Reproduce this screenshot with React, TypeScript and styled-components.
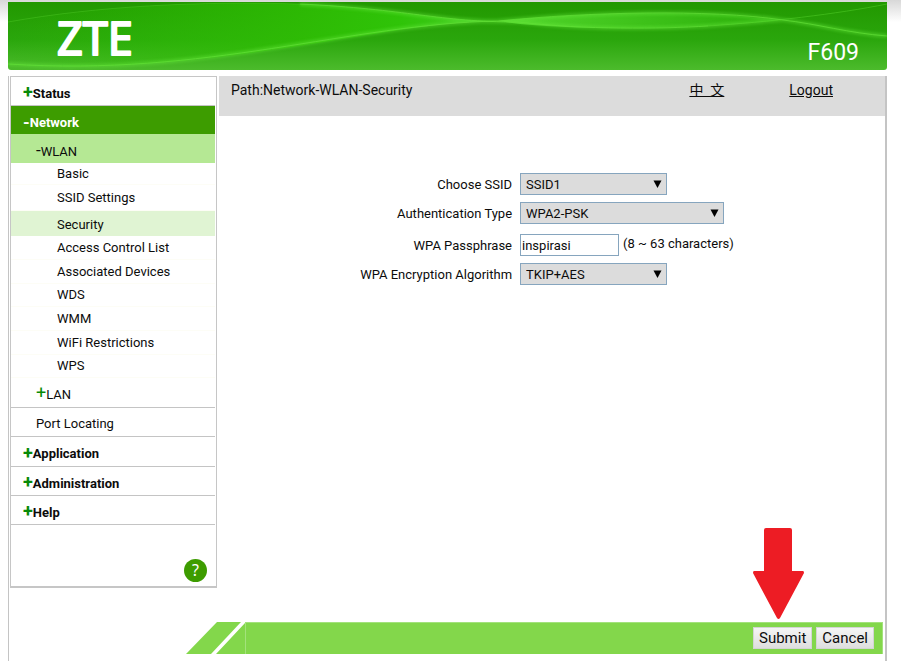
import React from "react";
import styled, { createGlobalStyle } from "styled-components";

const GlobalStyle = createGlobalStyle`
  * { box-sizing: border-box; }
  html { background: #fff; }
  body {
    margin: 0;
    font-family: Roboto, "Noto Sans CJK SC", sans-serif;
    font-size: 13px;
    line-height: 16px;
    color: #0c0c0c;
  }
`;

const Page = styled.div`
  display: flex;
  flex-direction: column;
  min-height: 100vh;
  padding: 2px 14px 0 8px;
  background: linear-gradient(#d8d8d8, #fff 22px);
`;

const Header = styled.header`
  display: grid;
  height: 68px;
  overflow: hidden;
  border-radius: 0 0 3px 3px;
  background: linear-gradient(#229800, #2aa60c 55%, #4cbb2c);
  > * { grid-area: 1 / 1; }
`;

const Waves = styled.svg`
  width: 100%;
  height: 68px;
`;

const HeaderContent = styled.div`
  z-index: 1;
  display: flex;
  justify-content: space-between;
  align-items: flex-end;
  padding: 0 28px 0 47px;
  color: #fff;
`;

const Logo = styled.svg`
  width: 90px;
  height: 68px;
  font-family: "Noto Sans", sans-serif;
  font-size: 45px;
`;

const Model = styled.span`
  padding-bottom: 4px;
  font-size: 23px;
  line-height: 26px;
`;

const Frame = styled.div`
  flex: 1;
  display: flex;
  flex-direction: column;
  margin-top: 6px;
  border: solid #c4c4c4;
  border-width: 0 2px 0 1px;
  background: #fff;
`;

const Columns = styled.div`
  flex: 1;
  display: flex;
  align-items: flex-start;
  gap: 2px;
`;

const Sidebar = styled.nav`
  flex: none;
  display: flex;
  flex-direction: column;
  width: 207px;
  margin-left: 1px;
  border: 1px solid #c6c6c6;
  border-bottom-width: 2px;
  padding: 0 1px 0 0;
`;

type Kind = "top" | "active" | "section" | "sub" | "selected" | "branch";

const tone: Record<Kind, string> = {
  top: "padding: 5px 0 0 12px; font-weight: 700; border-bottom: 1px solid #c4c4c4;",
  active: "padding: 6px 0 0 12px; font-weight: 700; color: #fff; background: #3d9c00;",
  section: "padding: 6px 0 0 25px; background: #b5e894;",
  sub: "padding-left: 46px; border-bottom: 1px solid #fdfdf6;",
  selected: "padding: 2px 0 0 46px; background: #e0f4d3;",
  branch: "padding: 4px 0 0 25px; border-bottom: 1px solid #c4c4c4;",
};

const MenuLink = styled.a<{ $kind: Kind; $height: number }>`
  display: flex;
  align-items: center;
  height: ${(p) => p.$height}px;
  color: inherit;
  text-decoration: none;
  ${(p) => tone[p.$kind]}
`;

const Sign = styled.span<{ $plus?: boolean }>`
  padding-bottom: 3px;
  font-size: ${(p) => (p.$plus ? 18 : 17)}px;
  color: ${(p) => (p.$plus ? "#078a07" : "inherit")};
`;

const HelpRow = styled.div`
  display: flex;
  justify-content: flex-end;
  padding: 34px 8px 4px;
`;

const HelpButton = styled.button`
  width: 23px;
  height: 23px;
  padding: 0;
  border: 0;
  border-radius: 50%;
  background: #3d9c00;
  color: #fff;
  font: 16px/23px "Noto Sans", sans-serif;
`;

const Main = styled.main`
  flex: 1;
`;

const PathBar = styled.div`
  display: flex;
  height: 40px;
  padding: 6px 52px 0 12px;
  background: #dcdcdc;
  font-size: 14px;
`;

const Path = styled.span`
  flex: 1;
`;

const BarLink = styled.a`
  margin-left: 65px;
  color: inherit;
  text-decoration: underline;
  &:lang(zh) { white-space: pre; }
`;

const Form = styled.form`
  display: flex;
  flex-direction: column;
  gap: 7px;
  padding-top: 57px;
`;

const Field = styled.div<{ $spaced?: boolean }>`
  display: grid;
  grid-template-columns: 44% 1fr;
  column-gap: 8px;
  align-items: center;
  margin-top: ${(p) => (p.$spaced ? 3 : 0)}px;
`;

const Label = styled.label`
  padding-top: 1px;
  text-align: right;
`;

const Control = styled.div`
  display: flex;
  align-items: center;
  gap: 4px;
`;

const SelectBox = styled.div<{ $wide?: boolean }>`
  display: grid;
  align-items: center;
  width: ${(p) => (p.$wide ? 204 : 147)}px;
  > * { grid-area: 1 / 1; }
`;

const Select = styled.select`
  appearance: none;
  width: 100%;
  height: 22px;
  padding: 1px 20px 0 5px;
  border: 1px solid #86a5be;
  border-radius: 0;
  background: #dcdcdc;
  color: inherit;
  font: inherit;
`;

const Chevron = styled.svg`
  justify-self: end;
  width: 9px;
  height: 8px;
  margin-right: 5px;
  pointer-events: none;
`;

const TextInput = styled.input`
  width: 99px;
  height: 22px;
  padding: 1px 0 0 1px;
  border: 1px solid #86a5be;
  background: #fff;
  color: inherit;
  font: inherit;
`;

const Hint = styled.span`
  padding-bottom: 2px;
`;

const Footer = styled.footer`
  display: flex;
  height: 32px;
  margin: 0 2px 7px 177px;
`;

const Slant = styled.svg`
  flex: none;
  width: 59px;
  height: 32px;
`;

const Actions = styled.div`
  flex: 1;
  display: flex;
  justify-content: flex-end;
  align-items: center;
  gap: 4px;
  padding: 0 8px 1px 0;
  border: 1px solid #a3e27c;
  border-bottom-width: 0;
  background: #83d74b;
`;

const ActionButton = styled.button`
  height: 22px;
  padding: 0 5px;
  border: 1px solid #d4d4d4;
  background: linear-gradient(#f5f5f5, #dedede);
  color: #0c0c0c;
  font: 15px/20px Roboto, sans-serif;
`;

const Pointed = styled.div`
  position: relative;
  display: flex;
`;

const Arrow = styled.svg`
  position: absolute;
  bottom: 30px;
  left: 0;
  width: 51px;
  height: 91px;
  pointer-events: none;
`;

type Item = { text: string; kind: Kind; height: number; sign?: "+" | "-" };

const menu: Item[] = [
  { text: "Status", kind: "top", height: 29, sign: "+" },
  { text: "Network", kind: "active", height: 28, sign: "-" },
  { text: "WLAN", kind: "section", height: 29, sign: "-" },
  { text: "Basic", kind: "sub", height: 22 },
  { text: "SSID Settings", kind: "sub", height: 26 },
  { text: "Security", kind: "selected", height: 25 },
  { text: "Access Control List", kind: "sub", height: 24 },
  { text: "Associated Devices", kind: "sub", height: 24 },
  { text: "WDS", kind: "sub", height: 23 },
  { text: "WMM", kind: "sub", height: 24 },
  { text: "WiFi Restrictions", kind: "sub", height: 24 },
  { text: "WPS", kind: "sub", height: 23 },
  { text: "LAN", kind: "branch", height: 30, sign: "+" },
  { text: "Port Locating", kind: "branch", height: 29 },
  { text: "Application", kind: "top", height: 30, sign: "+" },
  { text: "Administration", kind: "top", height: 29, sign: "+" },
  { text: "Help", kind: "top", height: 29, sign: "+" },
];

function Dropdown({ id, options, wide }: { id: string; options: string[]; wide?: boolean }) {
  return (
    <SelectBox $wide={wide}>
      <Select id={id}>
        {options.map((o) => (
          <option key={o}>{o}</option>
        ))}
      </Select>
      <Chevron viewBox="0 0 9 8" aria-hidden="true">
        <path d="M0.5 0.5H8.5L4.5 8Z" fill="#000" />
      </Chevron>
    </SelectBox>
  );
}

function HeaderWaves() {
  return (
    <Waves viewBox="0 0 879 68" preserveAspectRatio="none" aria-hidden="true">
      <defs>
        <linearGradient id="glow" x1="0" x2="1">
          <stop offset="0" stopColor="#2cc000" stopOpacity="0" />
          <stop offset="0.6" stopColor="#2fc004" stopOpacity="0.8" />
          <stop offset="0.8" stopColor="#2fc408" />
          <stop offset="1" stopColor="#48cc28" />
        </linearGradient>
        <linearGradient id="tail" x1="0" x2="1">
          <stop offset="0" stopColor="#52d62c" />
          <stop offset="1" stopColor="#2aae08" />
        </linearGradient>
        <filter id="soft" x="-5%" y="-20%" width="110%" height="140%">
          <feGaussianBlur stdDeviation="1.6" />
        </filter>
      </defs>
      <path d="M0 20C90 4 190-1 292 2C380 5 430 19 490 19C380 20 240 65 60 64L0 61Z" fill="url(#glow)" />
      <path d="M490 19C580 10 670 10 720 13C740 15 760 17 775 18C700 27 560 30 490 19Z" fill="url(#tail)" />
      <g fill="none" stroke="#6bea40" strokeWidth="4" opacity="0.4" filter="url(#soft)">
        <path d="M0 62C200 75 340 22 490 19C580 10 700 7 775 18C810 22 840 31 879 34" />
        <path d="M292 2C400 7 430 20 510 20C580 28 650 27 700 24L775 18" />
      </g>
      <g fill="none" stroke="#62df38">
        <path d="M0 62C200 75 340 22 490 19C580 10 700 7 775 18C810 22 840 31 879 34" opacity="0.7" />
        <path d="M292 2C400 7 430 20 510 20C580 28 650 27 700 24" opacity="0.7" />
        <path d="M700 24C760 20 830 12 879 2" opacity="0.4" />
        <path d="M0 20C90 4 190-1 292 2" opacity="0.3" />
      </g>
    </Waves>
  );
}

export default function App() {
  return (
    <>
      <GlobalStyle />
      <Page>
        <Header>
          <HeaderWaves />
          <HeaderContent>
            <Logo viewBox="0 0 90 68" role="img" aria-label="ZTE">
              <text x="2" y="53" fill="#fff" stroke="#fff" strokeWidth="2" strokeLinejoin="round">ZTE</text>
            </Logo>
            <Model>F609</Model>
          </HeaderContent>
        </Header>
        <Frame>
          <Columns>
            <Sidebar aria-label="Main menu">
              {menu.map((m) => (
                <MenuLink key={m.text} href="#" $kind={m.kind} $height={m.height}>
                  {m.sign && <Sign $plus={m.sign === "+"}>{m.sign}</Sign>}
                  {m.text}
                </MenuLink>
              ))}
              <HelpRow>
                <HelpButton type="button" aria-label="Help">?</HelpButton>
              </HelpRow>
            </Sidebar>
            <Main>
              <PathBar>
                <Path>Path:Network-WLAN-Security</Path>
                <BarLink href="#" lang="zh">中  文</BarLink>
                <BarLink href="#">Logout</BarLink>
              </PathBar>
              <Form id="security" onSubmit={(e) => e.preventDefault()}>
                <Field>
                  <Label htmlFor="ssid">Choose SSID</Label>
                  <Dropdown id="ssid" options={["SSID1"]} />
                </Field>
                <Field>
                  <Label htmlFor="auth">Authentication Type</Label>
                  <Dropdown id="auth" options={["WPA2-PSK"]} wide />
                </Field>
                <Field $spaced>
                  <Label htmlFor="pass">WPA Passphrase</Label>
                  <Control>
                    <TextInput id="pass" defaultValue="inspirasi" />
                    <Hint>(8 ~ 63 characters)</Hint>
                  </Control>
                </Field>
                <Field>
                  <Label htmlFor="algo">WPA Encryption Algorithm</Label>
                  <Dropdown id="algo" options={["TKIP+AES"]} />
                </Field>
              </Form>
            </Main>
          </Columns>
          <Footer>
            <Slant viewBox="0 0 59 32" preserveAspectRatio="none" aria-hidden="true">
              <path d="M0 32L31 0H55L25 32ZM30 32L59 1V32Z" fill="#83d74b" />
            </Slant>
            <Actions>
              <Pointed>
                <ActionButton type="submit" form="security">Submit</ActionButton>
                <Arrow viewBox="0 0 51 91" aria-hidden="true">
                  <path d="M13 0H37Q39 0 39 2V43H50Q51 43 51 45L27 90Q25.500 92 24 90L0 45Q0 43 1 43H11V2Q11 0 13 0Z" fill="#ed1c24" />
                </Arrow>
              </Pointed>
              <ActionButton type="reset" form="security">Cancel</ActionButton>
            </Actions>
          </Footer>
        </Frame>
      </Page>
    </>
  );
}
